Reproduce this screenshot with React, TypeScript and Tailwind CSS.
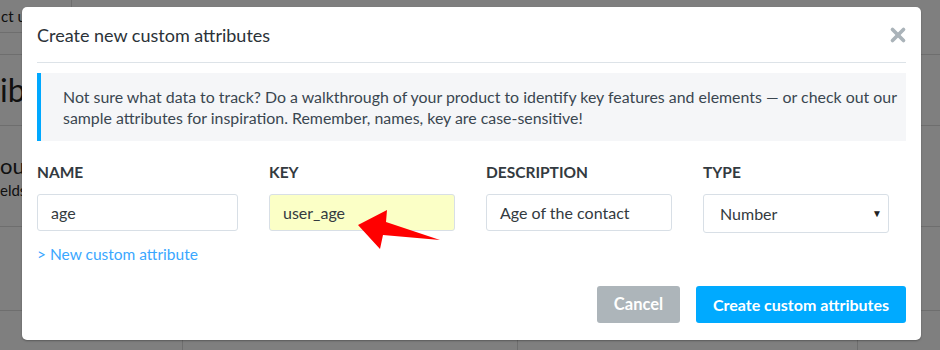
import { X } from 'lucide-react';

const font = { fontFamily: '"Lato", "Open Sans", sans-serif' };

function Field({ label, value, width, className }: { label: string; value: string; width: string; className?: string }) {
  return (
    <div className={`flex flex-col ${width}`}>
      <div className="text-[15.5px] font-bold uppercase leading-[20px] text-[#333a40]">{label}</div>
      <div
        className={`mt-[12px] flex h-[37px] items-center rounded-[3px] border border-[#d8dfe6] px-[13px] text-[16px] text-[#333a40] ${className ?? 'bg-white'}`}
      >
        {value}
      </div>
    </div>
  );
}

// Underlying page, dimmed by the overlay
function BackgroundPage() {
  return (
    <div className="flex h-[350px] w-[940px] flex-col overflow-hidden bg-white text-[#222]">
      <div className="flex h-[57px] border-b border-[#dcdcdc]">
        <div className="flex h-[33px] w-[72px] items-center border-b border-r border-[#dcdcdc] pl-[1px] text-[15px]">
          ct us
        </div>
      </div>
      <div className="flex h-[73px] items-center border-b border-[#dcdcdc] text-[32px]">
        <span>ib</span>
      </div>
      <div className="flex h-[103px] flex-col justify-center border-b border-[#dcdcdc]">
        <div className="text-[22px] leading-[28px]">out</div>
        <div className="text-[15px] leading-[20px]">elds</div>
      </div>
      <div className="h-[87px] border-b border-[#dcdcdc]" />
      <div className="flex h-[40px] text-[15px]">
        <div className="w-[182px]" />
        <div className="w-[335px] border-l border-[#dcdcdc] pl-[10px] pt-[8px]">test_score</div>
        <div className="w-[340px] border-l border-[#dcdcdc] pl-[10px] pt-[8px]">Score</div>
        <div className="flex-1 border-l border-[#dcdcdc] pl-[8px] pt-[8px]">Number</div>
      </div>
    </div>
  );
}

export default function App() {
  return (
    <div className="relative h-[350px] w-[940px] overflow-hidden" style={font}>
      <BackgroundPage />
      <div className="absolute inset-0 bg-black/50" />

      <div className="absolute left-[22px] top-[7px] flex h-[333px] w-[899px] flex-col rounded-[5px] bg-white px-[15px] shadow-[0_1px_2px_rgba(0,0,0,0.3)]">
        <div className="flex h-[56px] items-center justify-between border-b border-[#dde3e8]">
          <h2 className="text-[18px] leading-[24px] text-[#2b3238]">Create new custom attributes</h2>
          <X className="mr-[-3px] h-[22px] w-[22px] text-[#aab3b9]" strokeWidth={4} />
        </div>

        <div className="mt-[10px] whitespace-nowrap border-l-4 border-[#00a8ff] bg-[#f5f6f8] py-[13px] pl-[22px] text-[15.9px] leading-[21px] text-[#3a4650]">
          Not sure what data to track? Do a walkthrough of your product to identify key features and elements — or check out our
          <br />
          sample attributes for inspiration. Remember, names, key are case-sensitive!
        </div>

        <div className="mt-[21px] flex gap-[31px]">
          <Field label="Name" value="age" width="w-[201px]" />
          <div className="relative">
            <Field label="Key" value="user_age" width="w-[186px]" className="bg-[#fbffc6]" />
            <svg className="absolute left-[86px] top-[44px]" width="90" height="48" viewBox="0 0 90 48">
              <polygon points="3,19 32,4 31,16 85,34 28,29 25,43" fill="#ff0000" />
            </svg>
          </div>
          <Field label="Description" value="Age of the contact" width="w-[186px]" />
          <div className="flex w-[186px] flex-col">
            <div className="text-[15.5px] font-bold uppercase leading-[20px] text-[#333a40]">Type</div>
            <div className="mt-[12px] flex h-[39px] items-center justify-between rounded-[3px] border border-[#d8dfe6] bg-white pl-[16px] pr-[6px] text-[16px] text-[#333a40]">
              <span>Number</span>
              <span className="text-[10px] text-[#222]">▼</span>
            </div>
          </div>
        </div>

        <div className="mt-[11px] text-[15.5px] leading-[20px] text-[#3aa7ff]">&gt; New custom attribute</div>

        <div className="mt-[22px] flex justify-end gap-[16px]">
          <button className="h-[37px] w-[83px] rounded-[3px] bg-[#adb5ba] text-[16.5px] font-bold text-white">Cancel</button>
          <button className="h-[37px] w-[210px] rounded-[3px] bg-[#00aaff] text-[16px] font-bold text-white">
            Create custom attributes
          </button>
        </div>
      </div>
    </div>
  );
}
